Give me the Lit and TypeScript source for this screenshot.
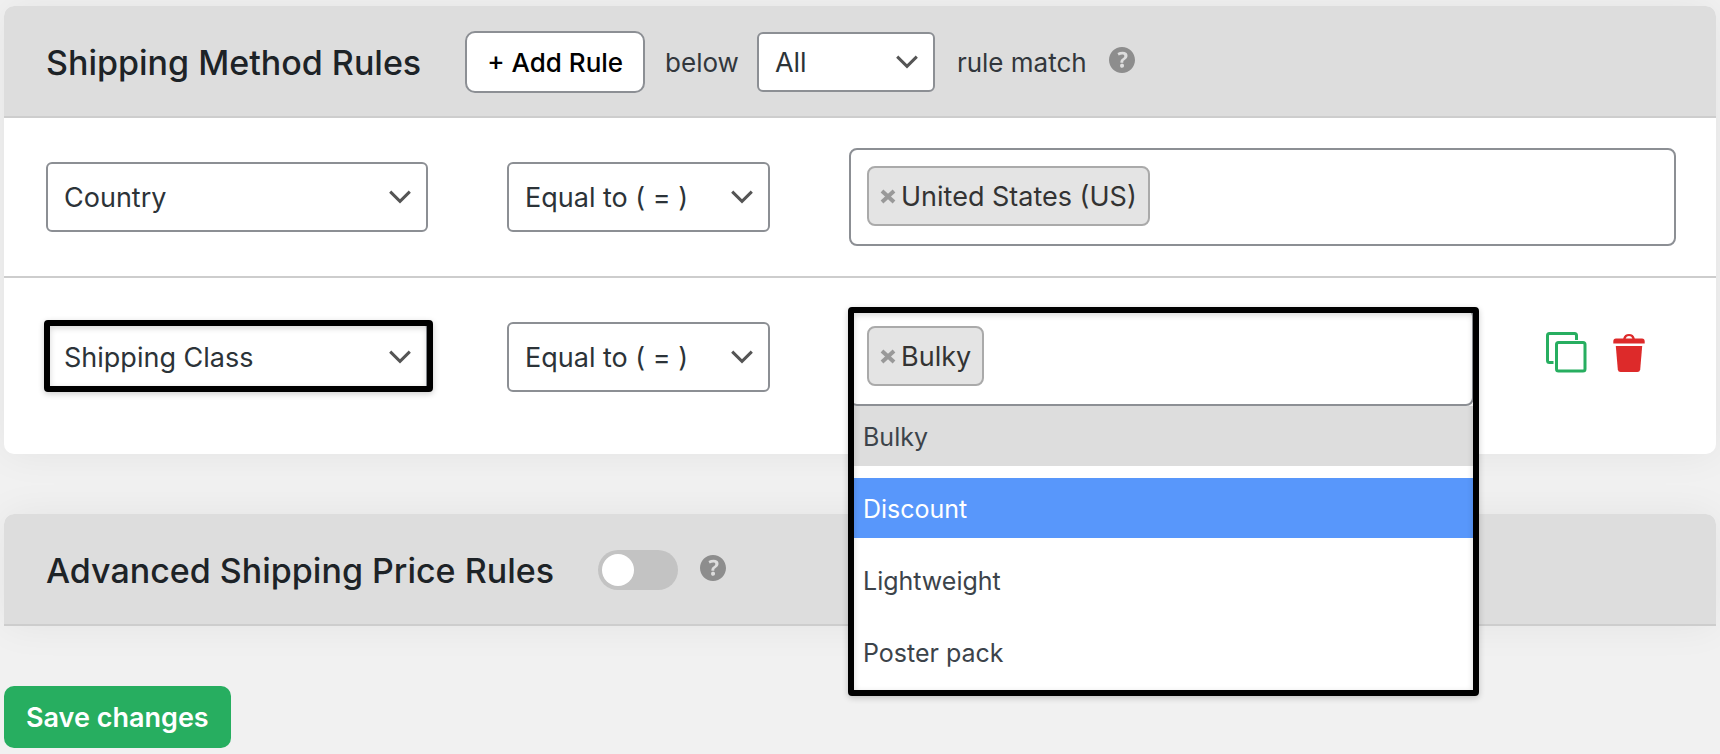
import { LitElement, html, css } from "lit";
import { customElement, property, state } from "lit/decorators.js";
import { classMap } from "lit/directives/class-map.js";

const chevron = html`<svg class="chevron" width="22" height="14" viewBox="0 0 22 14" aria-hidden="true">
  <path d="M1.2 1.6 L11 11.4 L20.8 1.6" fill="none" stroke="#555" stroke-width="3" />
</svg>`;

const baseStyles = css`
  :host {
    font-family: Inter, "Liberation Sans", sans-serif;
    color: #32373c;
  }
  *,
  *::before {
    box-sizing: border-box;
  }
  button,
  input,
  select {
    font: inherit;
    color: inherit;
    margin: 0;
  }
  button {
    cursor: pointer;
  }
`;

@customElement("help-tip")
class HelpTip extends LitElement {
  @property() text = "";

  static styles = css`
    :host {
      display: block;
      width: 26px;
      height: 26px;
    }
    .icon {
      display: block;
      fill: #8d8d8d;
    }
  `;

  render() {
    return html`<svg class="icon" width="26" height="26" viewBox="3 3 14 14" role="img" aria-label=${this.text}>
      <path
        d="M17 10c0-3.87-3.14-7-7-7-3.87 0-7 3.13-7 7s3.13 7 7 7c3.86 0 7-3.13 7-7zm-6.3 1.48H9.14v-.43c0-.38.08-.7.24-.98s.46-.57.88-.89c.41-.29.68-.53.81-.71.14-.18.2-.39.2-.62 0-.25-.09-.44-.28-.58-.19-.13-.45-.19-.79-.19-.58 0-1.25.15-2 .46l-.64-1.28c.87-.49 1.8-.74 2.77-.74.81 0 1.45.2 1.92.58.48.39.71.91.71 1.55 0 .43-.09.8-.29 1.11-.19.32-.57.67-1.11 1.06-.38.28-.61.49-.71.63-.1.15-.15.34-.15.57v.46zm-1.47 2.36c-.18-.17-.27-.41-.27-.72 0-.34.09-.6.27-.78.18-.18.45-.27.8-.27.34 0 .6.09.79.27.18.18.27.44.27.78 0 .31-.09.55-.28.73-.18.17-.44.26-.78.26-.35 0-.61-.09-.8-.27z"
      />
    </svg>`;
  }
}

@customElement("drop-down")
class DropDown extends LitElement {
  @property() label = "";
  @property() value = "";
  @property({ type: Array }) options: string[] = [];

  static styles = [
    baseStyles,
    css`
      :host {
        display: grid;
        align-items: center;
        height: 70px;
      }
      .select,
      .chevron {
        grid-area: 1 / 1;
      }
      .select {
        appearance: none;
        width: 100%;
        height: 100%;
        padding: 0 48px 0 16px;
        border: 2px solid #8c8f94;
        border-radius: 6px;
        background: #fff;
        color: #2c3338;
        font-size: 27px;
      }
      .chevron {
        justify-self: end;
        margin-right: 17px;
        pointer-events: none;
      }
    `,
  ];

  render() {
    return html`<select
        class="select"
        aria-label=${this.label}
        @change=${(e: Event) => (this.value = (e.target as HTMLSelectElement).value)}
      >
        ${this.options.map((o) => html`<option ?selected=${o === this.value}>${o}</option>`)}
      </select>
      ${chevron}`;
  }
}

@customElement("tag-field")
class TagField extends LitElement {
  @property() label = "";
  @property({ type: Array }) tags: string[] = [];
  @property({ type: Array }) options: string[] = [];
  @property({ type: Boolean }) open = false;
  @property() active = "";

  static styles = [
    baseStyles,
    css`
      :host {
        display: block;
        position: relative;
      }
      .box {
        display: flex;
        align-items: flex-start;
        gap: 10px;
        min-height: 98px;
        padding: 16px;
        border: 2px solid #8c8f94;
        border-radius: 8px;
        background: #fff;
      }
      .tag {
        display: flex;
        align-items: center;
        gap: 5px;
        height: 60px;
        padding: 0 11px;
        border: 2px solid #aaa;
        border-radius: 8px;
        background: #e4e4e4;
        color: #333;
        font-size: 27px;
        white-space: nowrap;
      }
      .remove {
        display: block;
        padding: 0;
        border: 0;
        background: none;
      }
      .cross {
        display: block;
      }
      .search {
        flex: 1;
        min-width: 0;
        height: 60px;
        border: 0;
        outline: 0;
        background: none;
        font-size: 27px;
      }
      .menu {
        position: absolute;
        z-index: 2;
        top: 100%;
        left: 0;
        right: 0;
        display: grid;
        gap: 12px;
        margin: 0;
        padding: 0 0 8px;
        list-style: none;
        background: #fff;
        color: #3c434a;
        font-size: 25px;
      }
      .option {
        display: flex;
        align-items: center;
        height: 60px;
        padding: 2px 14px 0;
      }
      .chosen {
        background: #ddd;
      }
      .active {
        background: #5897fb;
        color: #fff;
      }
    `,
  ];

  private remove(tag: string) {
    this.tags = this.tags.filter((t) => t !== tag);
  }

  render() {
    return html`<div class="box">
        ${this.tags.map(
          (t) => html`<span class="tag"
            ><button class="remove" aria-label="Remove ${t}" @click=${() => this.remove(t)}>
              <svg class="cross" width="16" height="16" viewBox="0 0 16 16">
                <path d="M2 3 L14 14 M14 3 L2 14" stroke="#999" stroke-width="4" />
              </svg></button
            >${t}</span
          >`
        )}
        <input class="search" type="text" aria-label=${this.label} />
      </div>
      ${this.open
        ? html`<ul class="menu" role="listbox" aria-label=${this.label}>
            ${this.options.map(
              (o) => html`<li
                class=${classMap({
                  option: true,
                  chosen: this.tags.includes(o) && o !== this.active,
                  active: o === this.active,
                })}
                role="option"
                aria-selected=${this.tags.includes(o) ? "true" : "false"}
                @mouseenter=${() => (this.active = o)}
              >
                ${o}
              </li>`
            )}
          </ul>`
        : ""}`;
  }
}

interface Rule {
  field: string;
  operator: string;
  values: string[];
  options: string[];
  open: boolean;
  active: string;
}

@customElement("app-root")
class AppRoot extends LitElement {
  @state() private rules: Rule[] = [
    { field: "Country", operator: "Equal to ( = )", values: ["United States (US)"], options: [], open: false, active: "" },
    {
      field: "Shipping Class",
      operator: "Equal to ( = )",
      values: ["Bulky"],
      options: ["Bulky", "Discount", "Lightweight", "Poster pack"],
      open: true,
      active: "Discount",
    },
  ];

  static styles = [
    baseStyles,
    css`
      :host {
        display: flex;
        flex-direction: column;
        align-items: stretch;
        gap: 60px;
        box-sizing: border-box;
        min-height: 100vh;
        padding: 6px 4px;
        background: #f1f1f1;
        overflow: hidden;
      }
      .card {
        border-radius: 10px;
        background: #fff;
        box-shadow: 0 0 40px rgba(0, 0, 0, 0.06);
      }
      .head {
        display: flex;
        align-items: center;
        height: 112px;
        padding: 2px 42px 0;
        border-bottom: 2px solid #cdcdcd;
        border-radius: 10px 10px 0 0;
        background: #ddd;
        font-size: 26px;
        white-space: nowrap;
      }
      .flat {
        border-radius: 10px 10px 0 0;
      }
      .title {
        margin: 0 44px 0 0;
        color: #1d2327;
        font-size: 34px;
        font-weight: 500;
      }
      .add {
        height: 62px;
        margin-right: 20px;
        padding: 0 20px;
        border: 2px solid #8c8f94;
        border-radius: 10px;
        background: #fff;
        color: #000;
        font-weight: 500;
      }
      .match {
        width: 178px;
        height: 60px;
        margin: 0 22px 0 18px;
      }
      .tip {
        margin: 0 0 4px 22px;
      }
      .rule {
        display: grid;
        grid-template-columns: 382fr 263fr 827fr;
        column-gap: 79px;
        align-items: center;
        padding: 30px 40px 30px 42px;
      }
      .rule + .rule {
        padding-bottom: 48px;
        border-top: 2px solid #cdcdcd;
      }
      .values {
        display: flex;
        align-items: flex-start;
      }
      .field {
        flex: 1;
      }
      .actions {
        display: flex;
        gap: 25px;
        padding: 24px 31px 0 72px;
      }
      .action {
        padding: 0;
        border: 0;
        background: none;
      }
      .glyph {
        display: block;
      }
      .marked {
        position: relative;
      }
      .frame {
        position: absolute;
        z-index: 3;
        inset: -2px -5px 0 -2px;
        border: 6px solid #000;
        border-radius: 4px;
        box-shadow: 0 2px 6px rgba(0, 0, 0, 0.2), inset 0 2px 6px rgba(0, 0, 0, 0.16);
        pointer-events: none;
      }
      .tall {
        inset: -1px -5px -290px -1px;
      }
      .switch {
        appearance: none;
        width: 80px;
        height: 40px;
        padding: 4px;
        border-radius: 20px;
        background: #c3c3c3;
      }
      .switch::before {
        content: "";
        display: block;
        width: 32px;
        height: 32px;
        border-radius: 50%;
        background: #fff;
      }
      .switch:checked {
        background: #27ae60;
      }
      .switch:checked::before {
        margin-left: auto;
      }
      .save {
        align-self: flex-start;
        height: 62px;
        padding: 0 22px;
        border: 0;
        border-radius: 10px;
        background: #27ae60;
        color: #fff;
        font-size: 27px;
        font-weight: 600;
      }
    `,
  ];

  private renderActions() {
    return html`<div class="actions">
      <button class="action" aria-label="Duplicate rule">
        <svg class="glyph" width="42" height="42" viewBox="0 0 42 42" fill="none" stroke="#27ae60" stroke-width="3">
          <rect x="10.5" y="10.5" width="28.5" height="28.5" rx="2" />
          <path d="M30.5 8 V3.5 Q30.5 1.5 28.5 1.5 H3.5 Q1.5 1.5 1.5 3.5 V28.5 Q1.5 30.5 3.5 30.5 H7.5" />
        </svg>
      </button>
      <button class="action" aria-label="Delete rule">
        <svg class="glyph" width="32" height="42" viewBox="0 0 32 42" fill="#dd2a2a">
          <path d="M0.3 11.5 V9.3 Q0.3 6.6 3 6.4 H10.2 Q11.4 2 16 2 Q20.6 2 21.8 6.4 H29 Q31.7 6.6 31.7 9.3 V11.5 Z M12.6 6.4 H19.4 Q18.4 4 16 4 Q13.6 4 12.6 6.4 Z" fill-rule="evenodd" />
          <path d="M2.8 14 H29.2 L27.2 37.5 Q26.8 40 24.4 40 H7.6 Q5.2 40 4.8 37.5 Z" />
        </svg>
      </button>
    </div>`;
  }

  private renderRule(rule: Rule) {
    return html`<div class="rule">
      <div class="marked">
        <drop-down label="Condition" .options=${["Country", "Shipping Class"]} .value=${rule.field}></drop-down>
        ${rule.open ? html`<div class="frame"></div>` : ""}
      </div>
      <drop-down label="Operator" .options=${["Equal to ( = )", "Not equal to ( != )"]} .value=${rule.operator}></drop-down>
      <div class="values">
        <div class="field marked">
          <tag-field
            label=${rule.field}
            .tags=${rule.values}
            .options=${rule.options}
            .open=${rule.open}
            .active=${rule.active}
          ></tag-field>
          ${rule.open ? html`<div class="frame tall"></div>` : ""}
        </div>
        ${rule.open ? this.renderActions() : ""}
      </div>
    </div>`;
  }

  render() {
    return html`
      <section class="card">
        <header class="head">
          <h2 class="title">Shipping Method Rules</h2>
          <button class="add">+ Add Rule</button>
          <span>below</span>
          <drop-down class="match" label="Rules to match" .options=${["All", "Any"]} .value=${"All"}></drop-down>
          <span>rule match</span>
          <help-tip class="tip" text="Help"></help-tip>
        </header>
        ${this.rules.map((r) => this.renderRule(r))}
      </section>
      <section class="card flat">
        <header class="head">
          <h2 class="title" id="advanced">Advanced Shipping Price Rules</h2>
          <input class="switch" type="checkbox" role="switch" aria-labelledby="advanced" />
          <help-tip class="tip" text="Help"></help-tip>
        </header>
      </section>
      <button class="save">Save changes</button>
    `;
  }
}
